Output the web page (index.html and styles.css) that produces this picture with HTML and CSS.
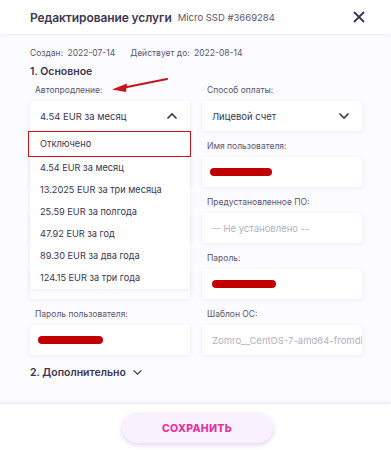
FILE: index.html
```html
<!DOCTYPE html>
<html lang="ru">
<head>
    <meta charset="UTF-8">
    <meta name="viewport" content="width=device-width, initial-scale=1.0">
    <title>Редактирование услуги</title>
    <link rel="stylesheet" href="styles.css">
</head>
<body>
    <div class="modal">
        <div class="modal-header">
            <h1>Редактирование услуги</h1>
            <span class="service-id">Micro SSD #3669284</span>
            <span class="close">
                <svg width="14" height="14" viewBox="0 0 14 14"><path d="M2 2L12 12M12 2L2 12" stroke="#3c3650" stroke-width="1.8" fill="none"/></svg>
            </span>
        </div>

        <div class="modal-body">
            <div class="dates">
                <span>Создан: <b>2022-07-14</b></span>
                <span>Действует до: <b>2022-08-14</b></span>
            </div>

            <h2 class="section-title">1. Основное</h2>

            <div class="fields">
                <div class="field autorenew">
                    <label>Автопродление:</label>
                    <div class="select open">
                        <span>4.54 EUR за месяц</span>
                        <svg width="12" height="8" viewBox="0 0 12 8"><path d="M1.5 6.5L6 2L10.5 6.5" stroke="#3c3650" stroke-width="1.6" fill="none"/></svg>
                    </div>
                    <ul class="dropdown">
                        <li class="current">Отключено</li>
                        <li>4.54 EUR за месяц</li>
                        <li>13.2025 EUR за три месяца</li>
                        <li>25.59 EUR за полгода</li>
                        <li>47.92 EUR за год</li>
                        <li>89.30 EUR за два года</li>
                        <li>124.15 EUR за три года</li>
                    </ul>
                </div>
                <div class="field">
                    <label>Способ оплаты:</label>
                    <div class="select">
                        <span>Лицевой счет</span>
                        <svg width="12" height="8" viewBox="0 0 12 8"><path d="M1.5 1.5L6 6L10.5 1.5" stroke="#3c3650" stroke-width="1.6" fill="none"/></svg>
                    </div>
                </div>

                <div class="field"><label>&nbsp;</label><div class="input"></div></div>
                <div class="field">
                    <label>Имя пользователя:</label>
                    <div class="input"><span class="redact" style="width: 62px"></span></div>
                </div>

                <div class="field"><label>&nbsp;</label><div class="input"></div></div>
                <div class="field">
                    <label>Предустановленное ПО:</label>
                    <div class="input muted">-- Не установлено --</div>
                </div>

                <div class="field"><label>&nbsp;</label><div class="input"></div></div>
                <div class="field">
                    <label>Пароль:</label>
                    <div class="input"><span class="redact pass" style="width: 64px"></span></div>
                </div>

                <div class="field last">
                    <label>Пароль пользователя:</label>
                    <div class="input"><span class="redact" style="width: 65px"></span></div>
                </div>
                <div class="field last">
                    <label>Шаблон ОС:</label>
                    <div class="input muted clip">Zomro__CentOS-7-amd64-fromdis</div>
                </div>
            </div>

            <h2 class="section-title extra">2. Дополнительно
                <svg width="11" height="7" viewBox="0 0 12 8"><path d="M1.5 1.5L6 6L10.5 1.5" stroke="#3c3650" stroke-width="1.4" fill="none"/></svg>
            </h2>

            <svg class="arrow" width="60" height="20" viewBox="0 0 60 20">
                <path d="M57 2L12 11" stroke="#c4161c" stroke-width="2.2" stroke-linecap="round" fill="none"/>
                <path d="M2 12.5L17 6.5L16 15Z" fill="#c4161c"/>
            </svg>
        </div>

        <div class="modal-footer">
            <button>СОХРАНИТЬ</button>
        </div>
    </div>
</body>
</html>
```

FILE: styles.css
```css
body {
    margin: 0;
    background-color: #ffffff;
    color: #3c3650;
    font-family: Inter, "Noto Sans", sans-serif;
}
.modal {
    width: 391px;
    height: 450px;
    display: flex;
    flex-direction: column;
}
.modal-header {
    height: 34px;
    display: flex;
    align-items: center;
    padding: 0 25px 0 30px;
    background-color: #ffffff;
    box-shadow: 0 1px 3px rgba(120, 100, 200, 0.12);
    position: relative;
    z-index: 2;
}
.modal-header h1 {
    margin: 0;
    font-size: 12px;
    font-weight: 600;
    letter-spacing: -0.1px;
}
.service-id {
    font-size: 9.5px;
    color: #5a5570;
    margin-left: 6px;
    margin-top: 1px;
}
.close {
    margin-left: auto;
    display: flex;
}
.modal-body {
    flex: 1;
    background-color: #fcfbff;
    padding: 12px 29px 0 30px;
    position: relative;
}
.dates {
    font-size: 8.5px;
    color: #5a5570;
    display: flex;
    gap: 15px;
    height: 14px;
    align-items: center;
}
.dates b {
    font-weight: 400;
    margin-left: 2px;
}
.section-title {
    font-size: 10.5px;
    font-weight: 600;
    margin: 4px 0 0;
    height: 14px;
    display: flex;
    align-items: center;
    gap: 6px;
}
.fields {
    display: grid;
    grid-template-columns: 160px 160px;
    column-gap: 12px;
    margin-top: 6px;
}
.field {
    position: relative;
    height: 56px;
}
.field.last {
    height: 53px;
}
.field label {
    display: block;
    font-size: 8.5px;
    color: #5a5570;
    padding-left: 5px;
    height: 12px;
    line-height: 12px;
    margin-bottom: 5px;
}
.select, .input {
    height: 30px;
    background-color: #ffffff;
    border-radius: 3px;
    box-shadow: 0 1px 4px rgba(120, 100, 200, 0.1);
    display: flex;
    align-items: center;
    padding: 0 10px 0 10px;
    font-size: 9.5px;
    box-sizing: border-box;
}
.select {
    justify-content: space-between;
    padding-right: 12px;
}
.select.open {
    border-radius: 3px 3px 0 0;
}
.input.muted {
    color: #b3b0c4;
}
.input.clip {
    overflow: hidden;
    white-space: nowrap;
    padding-right: 0;
}
.redact {
    display: block;
    height: 8px;
    border-radius: 4px;
    background-color: #c00000;
    margin-left: -2px;
}
.redact.pass {
    margin-left: 0;
}
.dropdown {
    position: absolute;
    left: 0;
    right: 0;
    top: 47px;
    margin: 0;
    padding: 0;
    list-style: none;
    background-color: #ffffff;
    box-shadow: 0 2px 5px rgba(120, 100, 200, 0.12);
    z-index: 3;
}
.dropdown li {
    height: 22px;
    line-height: 22px;
    padding-left: 10px;
    font-size: 9.2px;
}
.dropdown li.current {
    height: 24px;
    line-height: 24px;
    border: 1px solid #c0161b;
    margin: 0 -1px 0 -2px;
    padding-left: 11px;
}
.section-title.extra {
    margin-top: 4px;
}
.arrow {
    position: absolute;
    left: 110px;
    top: 43px;
}
.modal-footer {
    height: 46px;
    background-color: #ffffff;
    box-shadow: 0 -1px 3px rgba(120, 100, 200, 0.15);
    display: flex;
    justify-content: center;
    align-items: center;
    position: relative;
}
.modal-footer button {
    width: 151px;
    height: 30px;
    border: none;
    border-radius: 15px;
    background-color: #f9f1fd;
    box-shadow: 0 2px 5px rgba(140, 90, 200, 0.25);
    color: #e2349f;
    font-family: Inter, sans-serif;
    font-weight: 800;
    font-size: 10.5px;
    letter-spacing: 0.3px;
    margin: 2px 0 0 3px;
}
```
